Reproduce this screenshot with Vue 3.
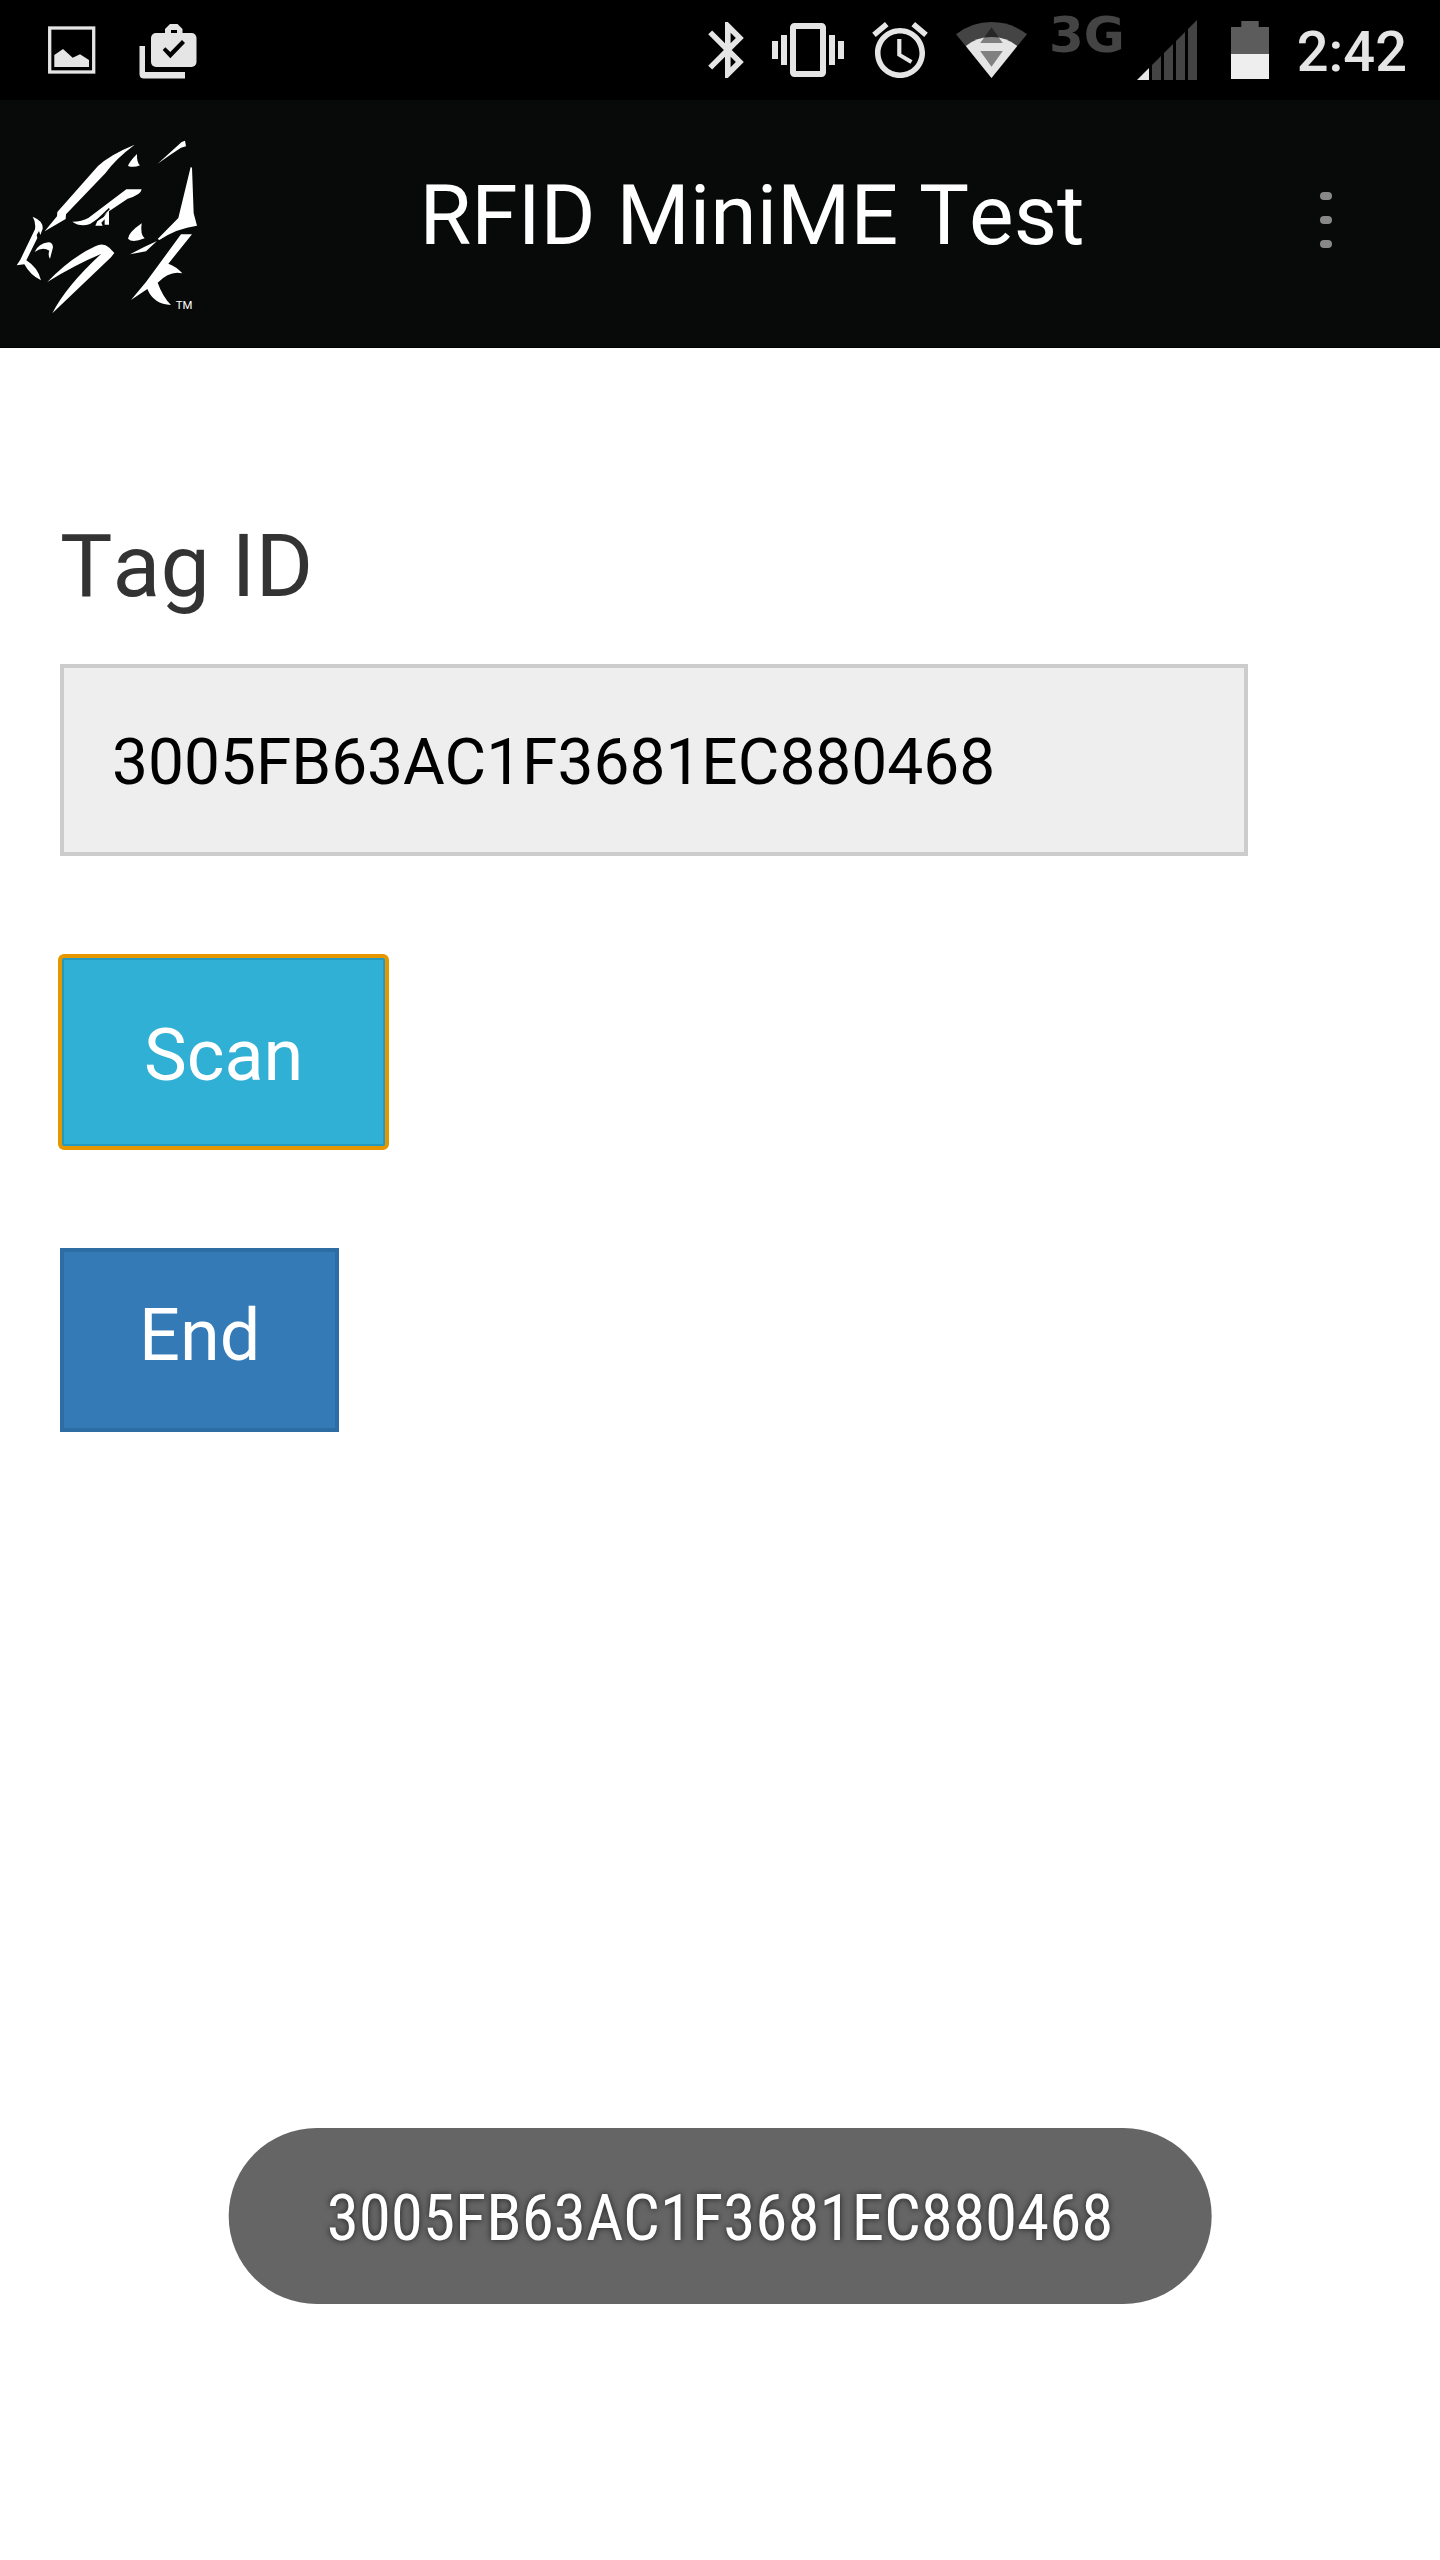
<template>
  <div class="screen">
    <div class="status-bar">
      <div class="status-left">
        <svg width="48" height="60" viewBox="0 0 48 60" aria-hidden="true">
          <rect x="1.7" y="8" width="44" height="44" fill="none" stroke="#e5e5e5" stroke-width="3.3" />
          <path d="M6.3 47V35L15 29L24.7 37.7L32 34.3L41 40V47Z" fill="#e5e5e5" />
        </svg>
        <svg width="58" height="60" viewBox="0 0 58 60" aria-hidden="true">
          <rect x="12" y="13" width="45.5" height="34" rx="5" fill="#e5e5e5" />
          <path d="M26 14V9L31 4H38.5L43.5 9V14Z" fill="#e5e5e5" />
          <rect x="32" y="10" width="6" height="3" fill="#000" />
          <path d="M23.7 30L26.3 27.3L31.3 32L43 20L46 23L31.3 38.3Z" fill="#000" />
          <path d="M.5 26H6V52H46V58.5H5Q.5 58.5 .5 54Z" fill="#e5e5e5" />
        </svg>
      </div>

      <div class="status-right">
        <svg width="36" height="56" viewBox="5 2 12.71 20" fill="#e5e5e5" aria-hidden="true">
          <path d="M17.71 7.71L12 2h-1v7.59L6.41 5 5 6.41 10.59 12 5 17.59 6.41 19 11 14.41V22h1l5.71-5.71-4.3-4.29 4.3-4.29zM13 5.83l1.88 1.88L13 9.59V5.83zm1.88 10.46L13 18.17v-3.76l1.88 1.88z" />
        </svg>
        <svg width="72" height="54" viewBox="0 3 24 18" fill="#e5e5e5" aria-hidden="true">
          <path d="M0 15h2V9H0v6zm3 2h2V7H3v10zm19-8v6h2V9h-2zm-3 8h2V7h-2v10zM16.5 3h-9C6.67 3 6 3.67 6 4.5v15c0 .83.67 1.5 1.5 1.5h9c.83 0 1.5-.67 1.5-1.5v-15c0-.83-.67-1.5-1.5-1.5zM16 19H8V5h8v14z" />
        </svg>
        <svg width="56" height="56" viewBox="2 1.86 20 20.14" fill="#e5e5e5" aria-hidden="true">
          <path d="M22 5.72l-4.6-3.86-1.29 1.53 4.6 3.86L22 5.72zM7.88 3.39L6.6 1.86 2 5.71l1.29 1.53 4.59-3.85zM12.5 8H11v6l4.75 2.85.75-1.23-4-2.37V8zM12 4c-4.97 0-9 4.03-9 9s4.02 9 9 9c4.97 0 9-4.03 9-9s-4.03-9-9-9zm0 16c-3.87 0-7-3.13-7-7s3.13-7 7-7 7 3.13 7 7-3.13 7-7 7z" />
        </svg>
        <svg width="71" height="56" viewBox="0 0 71 56" aria-hidden="true">
          <path d="M0 12.3Q15.5 0 35.5 0T71 12.3L35.5 56Z" fill="#444" />
          <path d="M9.8 24Q20.5 15 35.5 15T61.2 24L35.5 56Z" fill="#e5e5e5" />
          <path d="M35.5 5.3L46.8 21H24.2ZM24.2 29H46.8L35.5 44.7Z" fill="#000" fill-opacity=".44" />
        </svg>
        <div class="network">
          <span class="network-type">3G</span>
          <svg width="60" height="60" viewBox="0 0 60 60" aria-hidden="true">
            <path d="M0 60L12 48V60Z" fill="#e5e5e5" />
            <path d="M15 60V45L24 36V60ZM27 60V33L36 24V60ZM39 60V21L48 12V60ZM51 60V9L60 0V60Z" fill="#444" />
          </svg>
        </div>
        <svg width="38" height="58" viewBox="0 0 38 58" aria-hidden="true">
          <path d="M0 6H10.3V0H27.7V6H38V33H0Z" fill="#5c5c5c" />
          <rect y="33" width="38" height="25" fill="#eee" />
        </svg>
        <time class="clock">2:42</time>
      </div>
    </div>

    <header class="app-bar">
      <svg class="logo" viewBox="48 60 546 525" role="img" aria-label="Logo">
        <g fill="#fff">
          <path d="M404 74Q330 104 294 138L172 276L171 289L134 334L197 297L198 283L316 160Q345 118 404 74Z" />
          <path d="M411 102Q388 125 384 138Q402 144 420 136Q410 128 411 102Z" />
          <path d="M473 131L545 66L555 62L558 79L543 83Q510 104 473 131Z" />
          <path d="M572 141L576 143L581 280L591 317Q530 325 478 360L473 357L535 294Z" />
          <path d="M217 305Q246 305 265 294L379 208H425Q423 225 383 236L270 312Q240 322 217 305Z" />
          <path d="M327 269L327 314H314V298L304 308L308 317H286L292 303L311 291Z" />
          <path d="M98 290Q130 303 128 326L121 345L117 333L110 345L112 354L79 421Q114 443 123 481Q91 466 73 433L50 436L61 419L105 328Q108 306 98 290Z" />
          <path d="M104 396Q116 370 145 367Q158 367 159 382L150 416Q143 405 148 392Q128 379 104 396Z" />
          <path d="M142 486Q213 412 286 379Q309 367 328 383L343 399L333 412L157 580Q197 500 303 402Q226 434 142 486Z" />
          <path d="M425 310Q386 337 384 356Q396 370 434 355Q420 344 425 310Z" />
          <path d="M390 403Q430 381 471 363L438 394Q415 398 390 403Z" />
          <path d="M543 343H576L505 431Q530 440 547 460Q510 450 473 488Q488 530 513 555Q461 553 442 507L393 540L438 486Z" />
        </g>
        <!-- thin line between the mane and the eye -->
        <path d="M286 306L328 266" stroke="#080a09" stroke-width="5" />
        <text x="527" y="567" fill="#fff" class="trademark">TM</text>
      </svg>
      <h1 class="title">RFID MiniME Test</h1>
      <button class="menu" type="button" aria-label="Menu">
        <span v-for="n in 3" :key="n" class="dot"></span>
      </button>
    </header>

    <main class="content">
      <label class="label" for="tag-id">Tag ID</label>
      <input id="tag-id" class="tag-input" type="text" :value="tagId" readonly>
      <button class="btn btn-scan" type="button" @click="scan">Scan</button>
      <button class="btn btn-end" type="button" @click="end">End</button>
    </main>

    <div v-if="toast" class="toast" role="status">{{ toast }}</div>
  </div>
</template>

<script setup>
import { ref } from 'vue'

const tagId = ref('3005FB63AC1F3681EC880468')
const toast = ref(tagId.value)

function scan() {
  toast.value = tagId.value
}

function end() {
  toast.value = ''
}
</script>

<style>
body {
  margin: 0;
  background: #fff;
}
</style>

<style scoped>
.screen {
  min-height: 100vh;
  font-family: Roboto, "Liberation Sans", sans-serif;
}

svg {
  display: block;
  flex-shrink: 0;
}

.status-bar {
  display: flex;
  align-items: center;
  justify-content: space-between;
  height: 100px;
  padding: 0 33px 0 48px;
  background: #000;
}

.status-left {
  display: flex;
  gap: 43px;
}

.status-right {
  display: flex;
  align-items: center;
  gap: 28px;
}

.network {
  display: flex;
  gap: 12px;
  margin: 0 6px 0 -6px;
}

.network-type {
  font: bold 50px/30px "DejaVu Sans", sans-serif;
  color: #444;
}

.clock {
  font-size: 56px;
  font-weight: 500;
  line-height: 56px;
  padding-top: 4px;
  color: #e5e5e5;
}

.app-bar {
  display: flex;
  align-items: flex-start;
  padding: 40px 94px 32px 16px;
  background: #080a09;
  border-bottom: 1px solid #000;
}

.logo {
  width: 182px;
  height: 175px;
}

.trademark {
  font-size: 34px;
}

.title {
  flex: 1;
  margin: 0;
  font-size: 84px;
  font-weight: 400;
  font-kerning: none;
  line-height: 152px;
  text-align: center;
  color: #fff;
}

.menu {
  display: flex;
  flex-direction: column;
  align-items: center;
  justify-content: center;
  gap: 16px;
  width: 40px;
  height: 160px;
  padding: 0;
  border: 0;
  background: none;
}

.dot {
  width: 12px;
  height: 8px;
  border-radius: 4px;
  background: #888;
}

.content {
  display: flex;
  flex-direction: column;
  align-items: flex-start;
  padding: 156px 60px 0;
}

.label {
  margin-bottom: 36px;
  font-size: 88px;
  font-kerning: none;
  line-height: 124px;
  color: #333;
}

.tag-input {
  box-sizing: border-box;
  width: 90%;
  height: 192px;
  padding: 4px 48px 0;
  border: 4px solid #ccc;
  border-radius: 0;
  background: #eee;
  font-family: inherit;
  font-size: 64px;
  color: #000;
  outline: 0;
}

.btn {
  box-sizing: border-box;
  margin-top: 100px;
  border: 4px solid;
  font-family: inherit;
  font-size: 72px;
  line-height: 84px;
  color: #fff;
}

.btn-scan {
  height: 192px;
  padding: 8px 80px 0;
  border-color: #269abc;
  background: #31b0d5;
  outline: 4px solid #e59700;
  outline-offset: -2px;
  border-radius: 4px;
}

.btn-end {
  height: 184px;
  padding: 0 75px 8px;
  border-color: #2e6da4;
  background: #337ab7;
}

.toast {
  position: fixed;
  bottom: 256px;
  left: 50%;
  transform: translateX(-50%);
  padding: 4px 98px 0;
  border-radius: 88px;
  background: #656565;
  font-family: "Roboto Condensed", "Liberation Sans Narrow", Roboto, sans-serif;
  font-size: 65px;
  line-height: 172px;
  white-space: nowrap;
  color: #fff;
  text-shadow: 0 0 6px rgba(0, 0, 0, .7);
}
</style>
